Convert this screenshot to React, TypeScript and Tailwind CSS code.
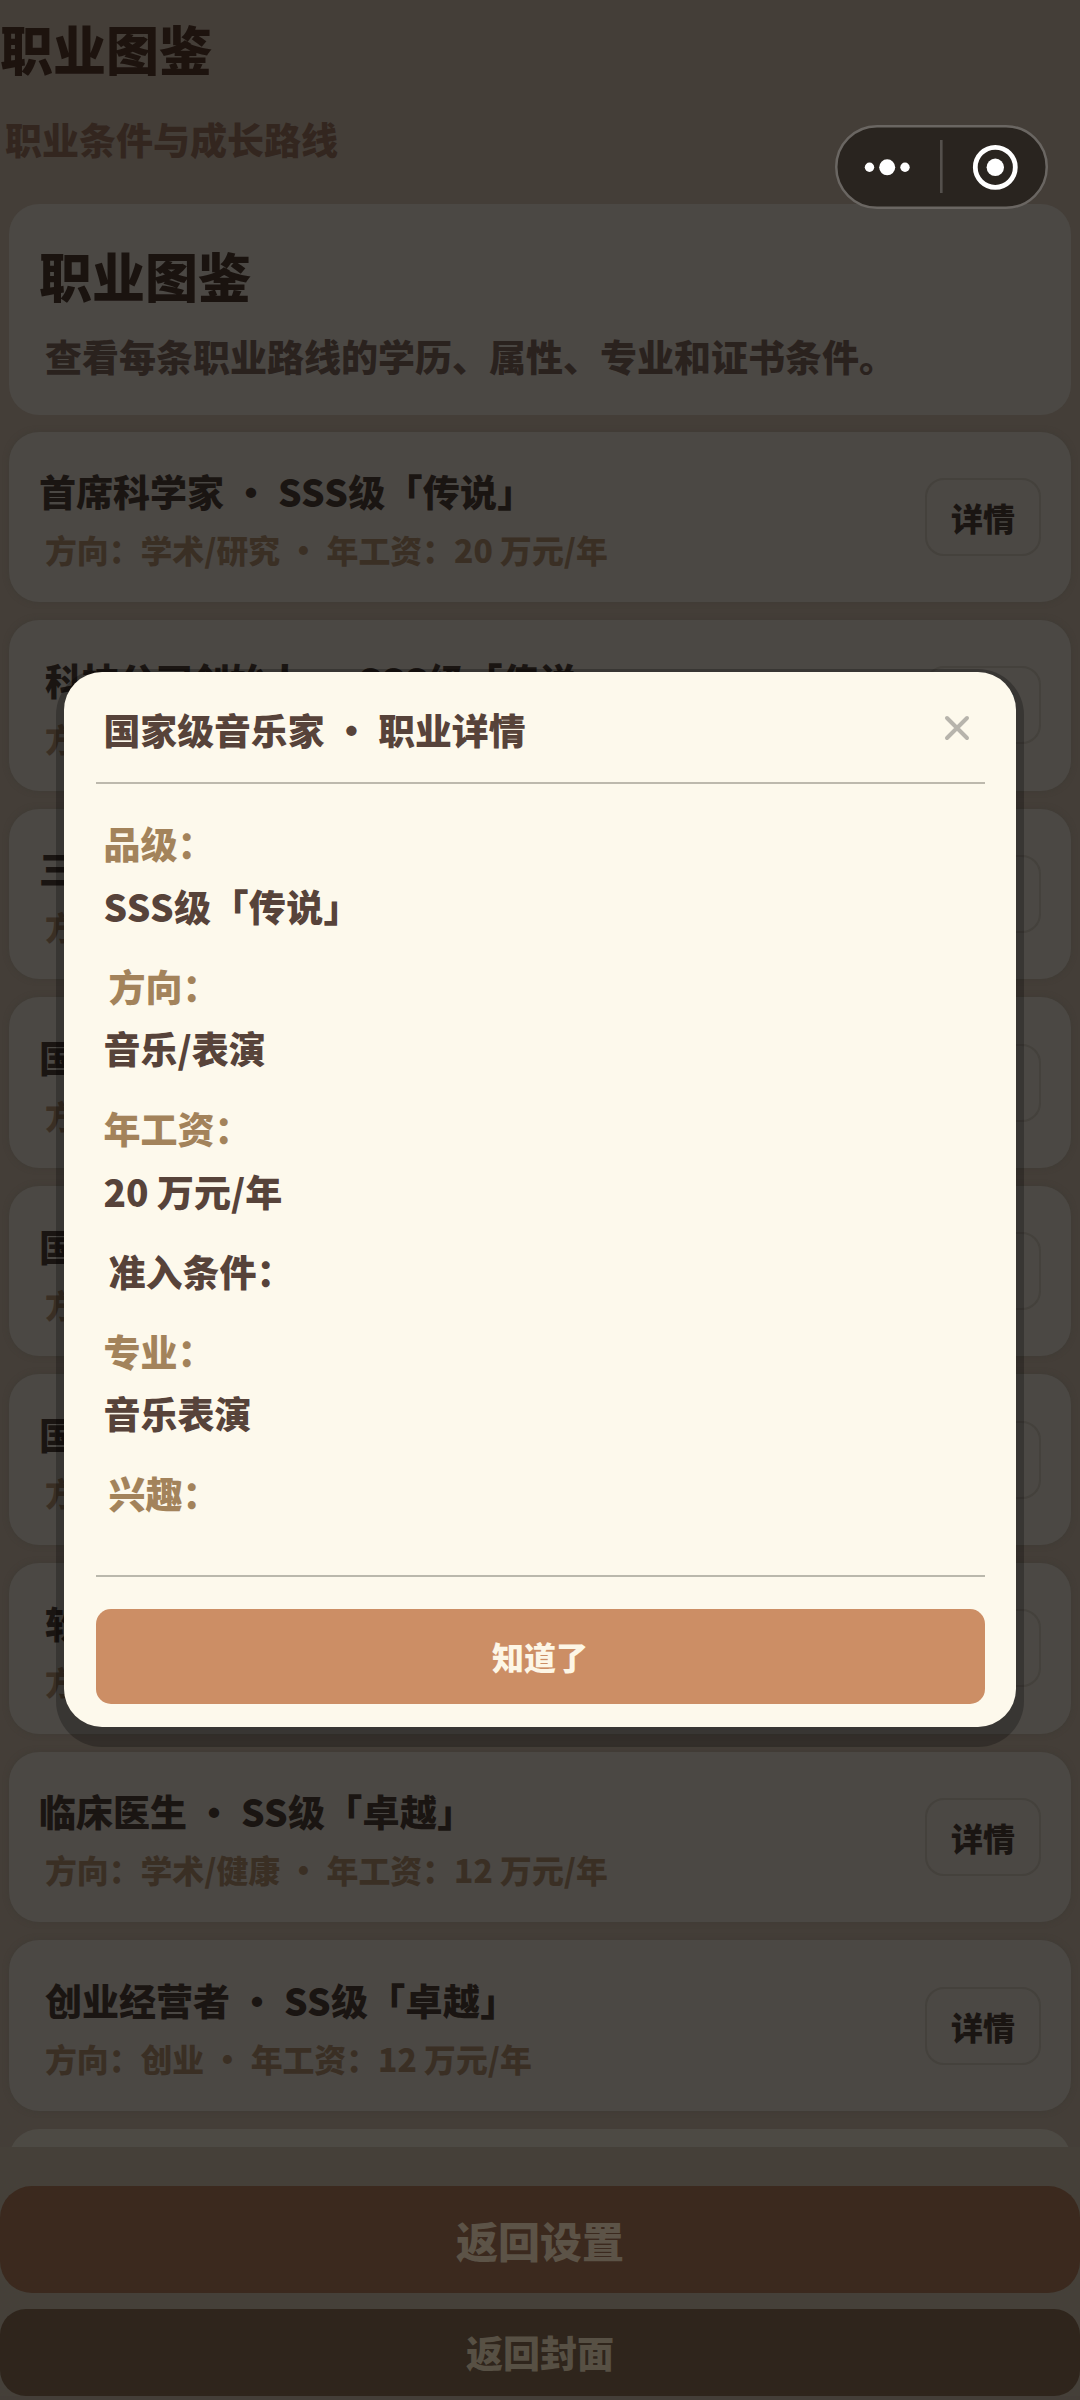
type Career = { name: string; grade: string; path: string; pay: string; indent?: boolean };

const careers: Career[] = [
  { name: '首席科学家', grade: 'SSS级「传说」', path: '学术/研究', pay: '20' },
  { name: '科技公司创始人', grade: 'SSS级「传说」', path: '创业', pay: '20', indent: true },
  { name: '三甲主任医师', grade: 'SSS级「传说」', path: '学术/健康', pay: '20' },
  { name: '国家级运动员', grade: 'SSS级「传说」', path: '体育/竞技', pay: '20' },
  { name: '国家级音乐家', grade: 'SSS级「传说」', path: '音乐/表演', pay: '20' },
  { name: '国家级艺术家', grade: 'SSS级「传说」', path: '艺术/创作', pay: '20' },
  { name: '软件架构师', grade: 'SS级「卓越」', path: '学术/科技', pay: '12', indent: true },
  { name: '临床医生', grade: 'SS级「卓越」', path: '学术/健康', pay: '12' },
  { name: '创业经营者', grade: 'SS级「卓越」', path: '创业', pay: '12', indent: true },
];

type Line = { text: string; tone: 'label' | 'value' | 'grade' | 'head'; indent?: boolean };

const lines: Line[] = [
  { text: '品级：', tone: 'label' },
  { text: 'SSS级「传说」', tone: 'grade' },
  { text: '方向：', tone: 'label', indent: true },
  { text: '音乐/表演', tone: 'value' },
  { text: '年工资：', tone: 'label' },
  { text: '20 万元/年', tone: 'value' },
  { text: '准入条件：', tone: 'head', indent: true },
  { text: '专业：', tone: 'label' },
  { text: '音乐表演', tone: 'value' },
  { text: '兴趣：', tone: 'label', indent: true },
];

const tones = {
  label: 'mt-[17px] text-[#a3835b]',
  value: 'text-[#57433a]',
  grade: 'tracking-[0.4px] text-[#57433a]',
  head: 'mt-[17px] text-[#57433a]',
};

function CareerCard({ career }: { career: Career }) {
  return (
    <div className="flex h-[170.6px] shrink-0 items-center justify-between rounded-[30px] bg-[#4b4844] pr-[30px] pl-[30px] shadow-[0_0_5px_1px_#403c36]">
      <div className="flex flex-col pt-[5px]">
        <div className={`text-[37px] leading-[60px] text-[#1a1512] ${career.indent ? 'pl-[6px]' : ''}`}>
          {career.name} • <span className="tracking-[0.3px]">{career.grade}</span>
        </div>
        <div className="pl-[6px] text-[31.85px] leading-[56px] text-[#3a2f24]">
          方向：{career.path} • 年工资：{career.pay} 万元/年
        </div>
      </div>
      <div className="flex h-[78px] w-[116px] items-center justify-center rounded-[19px] border-2 border-[#44413c] text-[32px] text-[#1a1512]">
        详情
      </div>
    </div>
  );
}

function Capsule() {
  return (
    <div className="absolute top-[125px] left-[835px]">
      <svg width="213" height="84" viewBox="0 0 213 84" fill="none">
        <rect x="1.25" y="1.25" width="210.5" height="81.5" rx="40.75" fill="#29241f" stroke="#6a6662" strokeWidth="2.5" />
        <circle cx="34.5" cy="42.3" r="4.7" fill="#fff" />
        <circle cx="52.2" cy="42.3" r="8" fill="#fff" />
        <circle cx="70" cy="42.3" r="4.7" fill="#fff" />
        <rect x="105" y="15" width="2.6" height="53" fill="#54504c" />
        <circle cx="160.3" cy="42.3" r="20" stroke="#fff" strokeWidth="4.8" />
        <circle cx="160.3" cy="42.3" r="8.7" fill="#fff" />
      </svg>
    </div>
  );
}

function DetailDialog() {
  return (
    <div className="absolute top-[669px] left-[56px] w-[968px] rounded-[46px] bg-black/25 px-[8px] pt-[3px] pb-[20px]">
      <div className="flex h-[1055px] flex-col rounded-[38px] bg-[#fdf9ec] px-[31.5px]">
        <div className="flex h-[112px] shrink-0 items-center justify-between border-b-2 border-[#bdb9ad] pr-[14px] pl-[8px]">
          <div className="pt-[3px] text-[36.85px] leading-[60px] text-[#57433a]">国家级音乐家 • 职业详情</div>
          <svg className="mt-[1px]" width="28" height="28" viewBox="0 0 28 28" stroke="#b7b4ac" strokeWidth="4" strokeLinecap="round">
            <path d="M4 4 24 24M24 4 4 24" />
          </svg>
        </div>
        <div className="flex h-[791px] shrink-0 flex-col overflow-hidden pt-[11px] pl-[8px]">
          {lines.map((line) => (
            <div
              key={line.text}
              className={`shrink-0 text-[37px] leading-[62.8px] ${tones[line.tone]} ${line.indent ? 'pl-[5px]' : ''}`}
            >
              {line.text}
            </div>
          ))}
        </div>
        <div className="border-t-2 border-[#bab8ac] pt-[32px]">
          <div className="flex h-[94.5px] items-center justify-center rounded-[15px] bg-[#cc8e65] text-[32px] text-[#fdf6e6]">
            知道了
          </div>
        </div>
      </div>
    </div>
  );
}

export default function App() {
  return (
    <div className="relative flex h-[2400px] w-[1080px] flex-col overflow-hidden bg-[#443e38] font-['Noto_Sans_CJK_SC',sans-serif] font-black whitespace-nowrap">
      <header className="flex h-[204px] shrink-0 flex-col">
        <div className="mt-[8px] text-[53px] leading-[80px] text-[#1d130e]">职业图鉴</div>
        <div className="mt-[21px] pl-[5px] text-[37px] leading-[60px] text-[#33261f]">职业条件与成长路线</div>
      </header>

      <main className="flex h-[1943px] shrink-0 flex-col gap-[18px] overflow-hidden px-[9px]">
        <section className="-mb-[1.5px] h-[211px] shrink-0 rounded-[30px] bg-[#4b4844] pl-[30px]">
          <div className="pt-[31px] text-[53px] leading-[80px] text-[#1a130f]">职业图鉴</div>
          <div className="mt-[11px] pl-[6px] text-[37px] leading-[60px] text-[#2a221e]">
            查看每条职业路线的学历、属性、专业和证书条件。
          </div>
        </section>
        {careers.map((career) => (
          <CareerCard key={career.name} career={career} />
        ))}
        <div className="h-[170.6px] shrink-0 rounded-[30px] bg-[#4d4a44]" />
      </main>

      <footer className="flex flex-col bg-[#454039] pt-[39px]">
        <div className="flex h-[107px] items-center justify-center rounded-[32px] bg-[#3b291e] text-[42px] text-[#5c5347]">
          返回设置
        </div>
        <div className="mt-[16px] flex h-[87px] items-center justify-center rounded-[26px] bg-[#2f251c] pt-[1px] text-[37px] text-[#575044]">
          返回封面
        </div>
      </footer>

      <Capsule />
      <DetailDialog />
    </div>
  );
}
